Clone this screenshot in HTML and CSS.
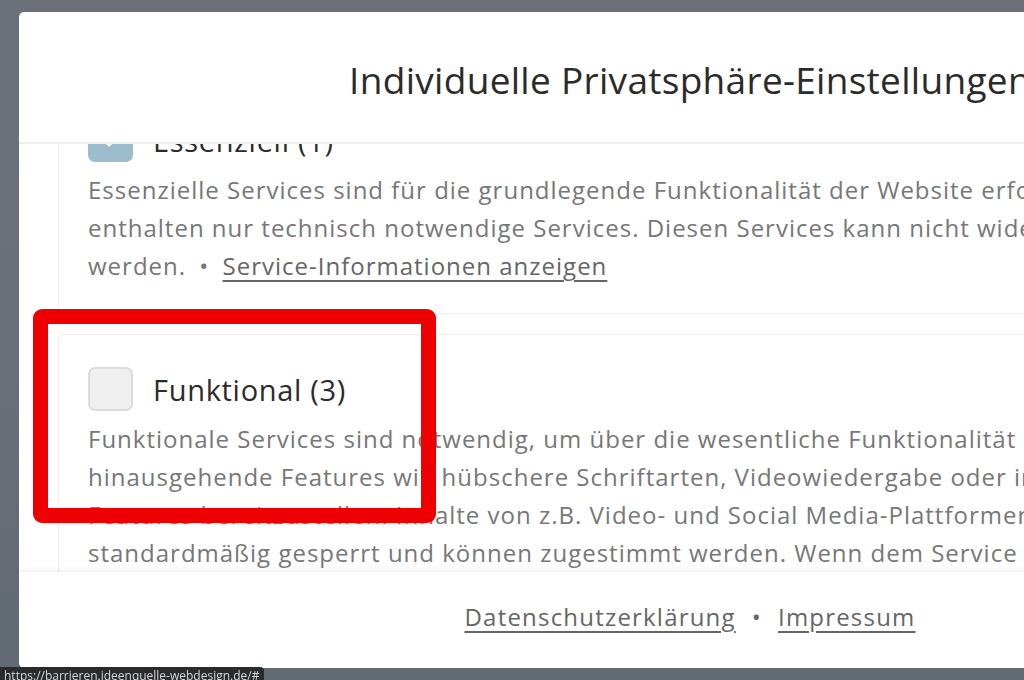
FILE: index.html
```html
<!DOCTYPE html>
<html lang="de">
<head>
  <meta charset="UTF-8" />
  <meta name="viewport" content="width=device-width, initial-scale=1.0" />
  <title>Privatsphäre-Einstellungen</title>
  <link rel="stylesheet" href="styles.css">
</head>
<body>
  <div class="backdrop">
    <div class="dialog">
      <div class="dialog-header">
        <h1>Individuelle Privatsphäre-Einstellungen</h1>
      </div>
      <div class="dialog-body">
        <div class="groups">
          <div class="group">
            <div class="group-head">
              <span class="check checked">
                <svg viewBox="0 0 24 24" width="22" height="22"><path d="M5 12.5l5 5 9-10" fill="none" stroke="#fff" stroke-width="3" stroke-linecap="round" stroke-linejoin="round"/></svg>
              </span>
              <span class="group-title">Essenziell (1)</span>
            </div>
            <p class="group-desc">Essenzielle Services sind für die grundlegende Funktionalität der Website erforderlich. Sie<br>enthalten nur technisch notwendige Services. Diesen Services kann nicht widersprochen<br>werden. <span class="dot">•</span> <a href="#">Service-Informationen anzeigen</a></p>
          </div>
          <div class="group">
            <div class="group-head">
              <span class="check"></span>
              <span class="group-title">Funktional (3)</span>
            </div>
            <p class="group-desc">Funktionale Services sind notwendig, um über die wesentliche Funktionalität der Website<br>hinausgehende Features wie hübschere Schriftarten, Videowiedergabe oder interaktive Web 2.0-<br>Features bereitzustellen. Inhalte von z.B. Video- und Social Media-Plattformen sind<br>standardmäßig gesperrt und können zugestimmt werden. Wenn dem Service zugestimmt wird,<br>werden diese Inhalte automatisch ohne weitere manuelle Einwilligung geladen.</p>
          </div>
        </div>
      </div>
      <div class="dialog-footer">
        <a href="#">Datenschutzerklärung</a>
        <span class="dot">•</span>
        <a href="#">Impressum</a>
      </div>
    </div>
  </div>

  <div class="marker"></div>
  <div class="status-url">https://barrieren.ideenquelle-webdesign.de/#</div>
</body>
</html>
```

FILE: styles.css
```css
* {
  box-sizing: border-box;
}
html, body {
  height: 100%;
}
body {
  margin: 0;
  overflow: hidden;
  font-family: 'Open Sans', sans-serif;
  background: #6c7079;
}
.backdrop {
  height: 100%;
  padding: 12px 0 12px 19px;
  background: linear-gradient(180deg, #6c7079 0%, #6a707a 45%, #626a73 100%);
}
.dialog {
  width: 1342px;
  height: 100%;
  background: #fff;
  border-radius: 5px;
  display: flex;
  flex-direction: column;
  overflow: hidden;
}
.dialog-header {
  flex: 0 0 132px;
  display: flex;
  align-items: center;
  justify-content: center;
  border-bottom: 2px solid #eeeeee;
  padding-top: 4px;
}
.dialog-header h1 {
  margin: 0;
  font-size: 37px;
  font-weight: 400;
  letter-spacing: 0.3px;
  color: #2b2b2b;
}
.dialog-body {
  flex: 1;
  overflow: hidden;
  padding: 0 39px;
}
/* list is scrolled down a bit, first group is partly out of view */
.groups {
  margin-top: -59px;
  display: flex;
  flex-direction: column;
  gap: 20px;
}
.group {
  border: 1px solid #eeeeee;
  border-radius: 6px;
  padding: 32px 30px 28px 29px;
}
.group-head {
  display: flex;
  align-items: center;
  gap: 20px;
}
.check {
  width: 45px;
  height: 44px;
  flex-shrink: 0;
  border-radius: 7px;
  background: #efefef;
  border: 2px solid #dcdcdc;
  display: flex;
  align-items: center;
  justify-content: center;
}
.check.checked {
  background: #9dbdcd;
  border-color: #9dbdcd;
}
.group-title {
  font-size: 29px;
  letter-spacing: 0.7px;
  color: #2b2b2b;
}
.group-desc {
  margin: 9px 0 0;
  font-size: 24px;
  line-height: 38px;
  letter-spacing: 1px;
  white-space: nowrap;
  color: #777;
}
.group-desc a,
.dialog-footer a {
  color: #666;
  text-decoration: underline;
  text-underline-offset: 5px;
}
.dot {
  margin: 0 6px;
}
.dialog-footer {
  flex: 0 0 96px;
  display: flex;
  align-items: center;
  justify-content: center;
  gap: 10px;
  font-size: 24px;
  letter-spacing: 1.2px;
  color: #666;
  padding-bottom: 8px;
  box-shadow: 0 -3px 6px rgba(0,0,0,0.05);
  position: relative;
}
.marker {
  position: absolute;
  left: 33px;
  top: 309px;
  width: 403px;
  height: 214px;
  border: 15px solid #ee0000;
  border-radius: 9px;
}
.status-url {
  position: fixed;
  left: 0;
  bottom: 0;
  height: 13px;
  padding: 0 5px 0 4px;
  background: #2a2b2d;
  color: #d6d6d6;
  font-size: 12px;
  line-height: 18px;
  border-top-right-radius: 4px;
  overflow: hidden;
}
```
